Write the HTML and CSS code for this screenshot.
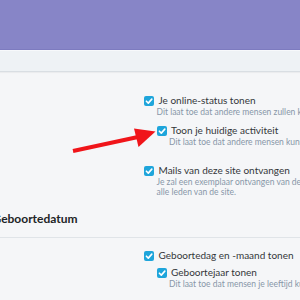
FILE: index.html
```html
<!DOCTYPE html>
<html lang="nl">
<head>
<meta charset="utf-8">
<link rel="stylesheet" href="styles.css">
</head>
<body>
<header class="top"></header>
<nav class="subnav"></nav>
<main class="content">
  <div class="row">
    <div class="label-col"></div>
    <ul class="choices">
      <li class="choice">
        <label class="check"><span class="box"><svg viewBox="0 0 10 10" width="10" height="10"><path d="M2.4 5.2 L4.3 7.1 L7.8 3.1" fill="none" stroke="#fff" stroke-width="1.6" stroke-linecap="round" stroke-linejoin="round"/></svg></span>Je online-status tonen</label>
        <div class="hint">Dit laat toe dat andere mensen zullen kunnen zien wanneer je online bent.</div>
        <ul class="choices nested">
          <li class="choice">
            <label class="check"><span class="box"><svg viewBox="0 0 10 10" width="10" height="10"><path d="M2.4 5.2 L4.3 7.1 L7.8 3.1" fill="none" stroke="#fff" stroke-width="1.6" stroke-linecap="round" stroke-linejoin="round"/></svg></span>Toon je huidige activiteit</label>
            <div class="hint">Dit laat toe dat andere mensen kunnen zien wat je momenteel aan het doen bent.</div>
          </li>
        </ul>
      </li>
      <li class="choice spaced">
        <label class="check"><span class="box"><svg viewBox="0 0 10 10" width="10" height="10"><path d="M2.4 5.2 L4.3 7.1 L7.8 3.1" fill="none" stroke="#fff" stroke-width="1.6" stroke-linecap="round" stroke-linejoin="round"/></svg></span>Mails van deze site ontvangen</label>
        <div class="hint">Je zal een exemplaar ontvangen van de mails die de beheerders sturen naar<br>alle leden van de site.</div>
      </li>
    </ul>
  </div>
  <h3 class="section-head">Geboortedatum</h3>
  <div class="row second">
    <div class="label-col"></div>
    <ul class="choices">
      <li class="choice">
        <label class="check"><span class="box"><svg viewBox="0 0 10 10" width="10" height="10"><path d="M2.4 5.2 L4.3 7.1 L7.8 3.1" fill="none" stroke="#fff" stroke-width="1.6" stroke-linecap="round" stroke-linejoin="round"/></svg></span>Geboortedag en -maand tonen</label>
        <ul class="choices nested tight">
          <li class="choice">
            <label class="check"><span class="box"><svg viewBox="0 0 10 10" width="10" height="10"><path d="M2.4 5.2 L4.3 7.1 L7.8 3.1" fill="none" stroke="#fff" stroke-width="1.6" stroke-linecap="round" stroke-linejoin="round"/></svg></span>Geboortejaar tonen</label>
            <div class="hint">Dit laat toe dat mensen je leeftijd kunnen zien in je profiel.</div>
          </li>
        </ul>
      </li>
    </ul>
  </div>
</main>
<svg class="arrow" width="300" height="300" viewBox="0 0 300 300">
  <line x1="73" y1="151" x2="138" y2="137" stroke="#f0151a" stroke-width="4"/>
  <polygon points="155.5,131.5 134,128.5 138.5,147" fill="#f0151a"/>
</svg>
</body>
</html>
```

FILE: styles.css
```css
* { box-sizing: border-box; }
html, body {
  margin: 0;
  padding: 0;
  width: 300px;
  height: 300px;
  overflow: hidden;
  background: #f5f6f8;
  font-family: Lato, "Open Sans", sans-serif;
  color: #34373a;
}
.top {
  height: 50px;
  background: #8785c7;
  border-bottom: 1px solid #7d7bbf;
}
.subnav {
  height: 22px;
  background: #eef2f5;
  border-top: 1px solid #f7f9fb;
  border-bottom: 1px solid #d9dee3;
  box-shadow: 0 1px 1px rgba(0,0,0,0.04);
}
.content {
  padding-top: 22px;
}
.row {
  display: grid;
  grid-template-columns: 144px 1fr;
}
.choices {
  list-style: none;
  margin: 0;
  padding: 0;
  min-width: 0;
}
.choices.nested {
  padding-left: 12.5px;
  margin-top: 7px;
}
.choices.nested.tight {
  margin-top: 4px;
}
.choice.spaced {
  margin-top: 17px;
}
.check {
  display: flex;
  align-items: center;
  gap: 4.5px;
  font-size: 10px;
  line-height: 13px;
  white-space: nowrap;
  color: #34373a;
}
.box {
  flex: none;
  width: 10px;
  height: 10px;
  border-radius: 2px;
  background: #1ea5db;
  display: flex;
}
.hint {
  padding-left: 12.5px;
  font-size: 8.5px;
  line-height: 10px;
  color: #8896a8;
  white-space: nowrap;
}
.section-head {
  margin: 14px 0 0 -7.5px;
  padding: 0 0 11px 0;
  font-size: 12px;
  line-height: 15px;
  font-weight: 700;
  color: #222426;
  white-space: nowrap;
}
.row.second {
  border-top: 1px solid #e0e4e8;
  padding-top: 11px;
}
.arrow {
  position: absolute;
  left: 0;
  top: 0;
  pointer-events: none;
}
```
